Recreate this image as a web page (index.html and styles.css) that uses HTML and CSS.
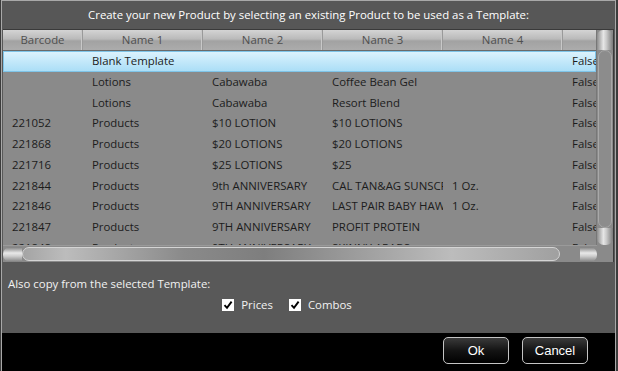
FILE: index.html
```html
<!DOCTYPE html>
<html lang="en">
<head>
    <meta charset="UTF-8">
    <title>New Product From Template</title>
    <link rel="stylesheet" href="styles.css">
</head>
<body>
    <div class="window">
        <div class="title">Create your new Product by selecting an existing Product to be used as a Template:</div>
        <div class="grid">
            <div class="grid-main">
                <div class="grid-view">
                    <div class="row header">
                        <div class="cell">Barcode</div>
                        <div class="cell">Name 1</div>
                        <div class="cell">Name 2</div>
                        <div class="cell">Name 3</div>
                        <div class="cell">Name 4</div>
                        <div class="cell">Global</div>
                    </div>
                    <div class="rows">
                        <div class="row selected">
                            <div class="cell"></div><div class="cell">Blank Template</div><div class="cell"></div><div class="cell"></div><div class="cell"></div><div class="cell">False</div>
                        </div>
                        <div class="row">
                            <div class="cell"></div><div class="cell">Lotions</div><div class="cell">Cabawaba</div><div class="cell">Coffee Bean Gel</div><div class="cell"></div><div class="cell">False</div>
                        </div>
                        <div class="row">
                            <div class="cell"></div><div class="cell">Lotions</div><div class="cell">Cabawaba</div><div class="cell">Resort Blend</div><div class="cell"></div><div class="cell">False</div>
                        </div>
                        <div class="row">
                            <div class="cell">221052</div><div class="cell">Products</div><div class="cell">$10 LOTION</div><div class="cell">$10 LOTIONS</div><div class="cell"></div><div class="cell">False</div>
                        </div>
                        <div class="row">
                            <div class="cell">221868</div><div class="cell">Products</div><div class="cell">$20 LOTIONS</div><div class="cell">$20 LOTIONS</div><div class="cell"></div><div class="cell">False</div>
                        </div>
                        <div class="row">
                            <div class="cell">221716</div><div class="cell">Products</div><div class="cell">$25 LOTIONS</div><div class="cell">$25</div><div class="cell"></div><div class="cell">False</div>
                        </div>
                        <div class="row">
                            <div class="cell">221844</div><div class="cell">Products</div><div class="cell">9th ANNIVERSARY</div><div class="cell">CAL TAN&amp;AG SUNSCREEN</div><div class="cell">1 Oz.</div><div class="cell">False</div>
                        </div>
                        <div class="row">
                            <div class="cell">221846</div><div class="cell">Products</div><div class="cell">9TH ANNIVERSARY</div><div class="cell">LAST PAIR BABY HAWAII</div><div class="cell">1 Oz.</div><div class="cell">False</div>
                        </div>
                        <div class="row">
                            <div class="cell">221847</div><div class="cell">Products</div><div class="cell">9TH ANNIVERSARY</div><div class="cell">PROFIT PROTEIN</div><div class="cell"></div><div class="cell">False</div>
                        </div>
                        <div class="row">
                            <div class="cell">221848</div><div class="cell">Products</div><div class="cell">9TH ANNIVERSARY</div><div class="cell">SKINNY ARABS</div><div class="cell"></div><div class="cell">False</div>
                        </div>
                    </div>
                </div>
                <div class="vscroll">
                    <div class="vcap"></div>
                    <div class="vthumb"></div>
                    <div class="vcap bottom"></div>
                </div>
            </div>
            <div class="grid-bottom">
                <div class="hscroll">
                    <div class="hcap"></div>
                    <div class="hthumb"></div>
                    <div class="hcap right"></div>
                </div>
                <div class="corner"></div>
            </div>
        </div>
        <div class="options">
            <div class="options-label">Also copy from the selected Template:</div>
            <div class="checks">
                <label class="check">
                    <span class="box"><svg width="10" height="10" viewBox="0 0 10 10"><path d="M1.5 5.2 L4 7.8 L8.6 1.6" fill="none" stroke="#000" stroke-width="1.9"/></svg></span>
                    Prices
                </label>
                <label class="check">
                    <span class="box"><svg width="10" height="10" viewBox="0 0 10 10"><path d="M1.5 5.2 L4 7.8 L8.6 1.6" fill="none" stroke="#000" stroke-width="1.9"/></svg></span>
                    Combos
                </label>
            </div>
        </div>
        <div class="buttons">
            <button class="btn ok">Ok</button>
            <button class="btn cancel">Cancel</button>
        </div>
    </div>
</body>
</html>
```

FILE: styles.css
```css
body {
    margin: 0;
    background-color: #3c3c3c;
    font-family: 'Open Sans', 'Noto Sans', sans-serif;
    font-size: 11.4px;
}
.window {
    margin-left: 1px;
    width: 613px;
    height: 370px;
    border: 1px solid #a8a8a8;
    border-bottom: none;
    background-color: #595959;
    display: flex;
    flex-direction: column;
}
.title {
    height: 28px;
    line-height: 28px;
    text-align: center;
    color: #fff;
    background-color: #575757;
}
.grid {
    margin: 0 1px;
    border-top: 1px solid #3a3a3a;
    border-right: 1px solid #3a3a3a;
    background-color: #8a8a8a;
}
.grid-main {
    display: flex;
    height: 215px;
}
.grid-view {
    flex: 1;
    overflow: hidden;
}
.row {
    display: grid;
    grid-template-columns: 80px 120px 120px 120px 120px 120px;
    height: 20.75px;
    line-height: 20.75px;
    color: #1c1c1c;
}
.cell {
    padding-left: 9px;
    white-space: nowrap;
    overflow: hidden;
    text-overflow: clip;
}
.header {
    height: 20px;
    line-height: 20px;
    color: #4f4f4f;
    background: linear-gradient(#d4d4d4, #bababa 45%, #a2a2a2 55%, #acacac);
    border-bottom: 1px solid #6a6a6a;
}
.header .cell {
    padding-left: 0;
    text-align: center;
    border-right: 1px solid #9a9a9a;
    box-shadow: inset -1px 0 0 #c8c8c8;
}
.rows {
    height: 194px;
    overflow: hidden;
}
.selected {
    background: linear-gradient(#def3fd, #c3e8fa 50%, #a9ddf6);
    box-shadow: inset 0 0 0 1px #7fc4e8;
}
.vscroll {
    width: 16px;
    display: flex;
    flex-direction: column;
    background-color: #8a8a8a;
    border-left: 1px solid #777;
}
.vcap {
    height: 20px;
    border-radius: 6px 6px 0 0;
    background: linear-gradient(90deg, #8c8c8c, #e6e6e6 40%, #c8c8c8 60%, #7a7a7a);
}
.vcap.bottom {
    height: 17px;
    border-radius: 0 0 7px 7px;
}
.vthumb {
    flex: 1;
    margin: 0 1px;
    border: 1px solid #a8a8a8;
    border-radius: 7px;
    background-color: #8c8c8c;
}
.grid-bottom {
    display: flex;
    height: 17px;
}
.hscroll {
    flex: 1;
    display: flex;
    align-items: center;
    border-top: 1px solid #9a9a9a;
}
.hcap {
    width: 19px;
    height: 15px;
    border-radius: 7px 0 0 7px;
    background: linear-gradient(#7e7e7e, #e8e8e8 40%, #cfcfcf 60%, #808080);
}
.hcap.right {
    width: 17px;
    border-radius: 0 7px 7px 0;
    margin-left: 20px;
}
.hthumb {
    flex: 1;
    height: 14px;
    box-sizing: border-box;
    border: 1px solid #d4d4d4;
    border-radius: 8px;
    background: linear-gradient(90deg, #a4a4a4, #bcbcbc 8%, #8a8a8a 30%, #7e7e7e 45%, #bcbcbc 80%, #a0a0a0);
}
.corner {
    width: 16px;
    background-color: #8a8a8a;
}
.options {
    height: 71px;
    color: #f2f2f2;
    background-color: #595959;
}
.options-label {
    padding: 14px 0 0 6px;
}
.checks {
    display: flex;
    justify-content: center;
    gap: 16px;
    margin-top: 6px;
    padding-right: 43px;
}
.check {
    display: flex;
    align-items: center;
    gap: 7px;
}
.box {
    width: 12px;
    height: 12px;
    background-color: #fff;
    display: flex;
    align-items: center;
    justify-content: center;
}
.buttons {
    flex: 1;
    background-color: #000;
    display: flex;
    justify-content: flex-end;
    gap: 13px;
    padding: 4px 27px 0 0;
}
.btn {
    width: 66px;
    height: 27px;
    border: 1px solid #c4c4c4;
    border-radius: 5px;
    background: linear-gradient(#3a3a3a, #141414 50%, #000);
    color: #fff;
    font-family: 'Liberation Sans', Arial, sans-serif;
    font-size: 13px;
}
```
